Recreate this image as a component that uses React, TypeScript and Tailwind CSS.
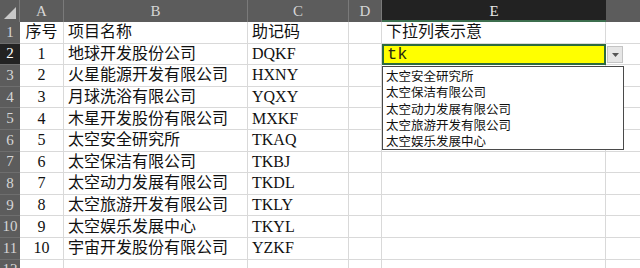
const ROWS: [string, string, string][] = [
  ["序号", "项目名称", "助记码"],
  ["1", "地球开发股份公司", "DQKF"],
  ["2", "火星能源开发有限公司", "HXNY"],
  ["3", "月球洗浴有限公司", "YQXY"],
  ["4", "木星开发股份有限公司", "MXKF"],
  ["5", "太空安全研究所", "TKAQ"],
  ["6", "太空保洁有限公司", "TKBJ"],
  ["7", "太空动力发展有限公司", "TKDL"],
  ["8", "太空旅游开发有限公司", "TKLY"],
  ["9", "太空娱乐发展中心", "TKYL"],
  ["10", "宇宙开发股份有限公司", "YZKF"],
  ["", "", ""],
];

const OPTIONS = [
  "太空安全研究所",
  "太空保洁有限公司",
  "太空动力发展有限公司",
  "太空旅游开发有限公司",
  "太空娱乐发展中心",
];

const FONT = "font-['Liberation_Serif','Noto_Sans_CJK_SC',serif]";
const cell = "h-full shrink-0 border-r border-b border-[#d9d9d9] flex items-center";

export default function App() {
  return (
    <div className={`relative w-[640px] h-[268px] overflow-hidden bg-white text-[#111] ${FONT}`}>
      {/* column headers */}
      <div className="flex h-[22px] bg-[#5c5c5c] text-[15px] text-[#d6d6d6]">
        <div className="relative w-[20px] shrink-0 border-r border-[#7a7a7a]">
          <svg className="absolute right-[3px] bottom-[3px]" width="12" height="12" viewBox="0 0 12 12">
            <polygon points="12,0 12,12 0,12" fill="#c8c8c8" />
          </svg>
        </div>
        <div className="flex w-[44px] shrink-0 items-center justify-center border-r border-[#7a7a7a]">A</div>
        <div className="flex w-[184px] shrink-0 items-center justify-center border-r border-[#7a7a7a]">B</div>
        <div className="flex w-[101px] shrink-0 items-center justify-center border-r border-[#7a7a7a]">C</div>
        <div className="flex w-[33px] shrink-0 items-center justify-center border-r border-[#7a7a7a]">D</div>
        <div className="flex w-[224px] shrink-0 items-center justify-center border-b-2 border-[#3c6e4e] bg-[#222] pt-[2px] text-[#e8e8e8]">E</div>
        <div className="w-[34px] shrink-0" />
      </div>

      {ROWS.map((r, i) => (
        <div key={i} className="flex h-[21.6px] text-[16px] leading-none">
          <div
            className={`flex w-[20px] shrink-0 items-center justify-center border-b border-[#6e6e6e] text-[15px] ${
              i === 1 ? "bg-[#222] text-white" : "bg-[#5c5c5c] text-[#d6d6d6]"
            }`}
          >
            {i + 1}
          </div>
          <div className={`${cell} w-[44px] justify-center`}>{r[0]}</div>
          <div className={`${cell} w-[184px] pl-[4px]`}>{r[1]}</div>
          <div className={`${cell} w-[101px] pl-[4px]`}>{r[2]}</div>
          <div className={`${cell} w-[33px]`} />
          {i === 1 ? (
            <div className="flex h-full w-[224px] shrink-0 items-center border-2 border-[#2d6a3f] bg-[#ffff00] pl-[3px] font-['Liberation_Mono',monospace] text-[17px] text-[#2a2a10]">
              tk
            </div>
          ) : (
            <div className={`${cell} w-[224px] pl-[4px]`}>{i === 0 ? "下拉列表示意" : ""}</div>
          )}
          <div className={`${cell} w-[34px] border-r-0`} />
        </div>
      ))}

      {/* validation dropdown arrow */}
      <div className="absolute left-[607px] top-[46px] flex h-[17px] w-[16px] items-center justify-center border border-[#c4c4c4] bg-[#e6e6e6]">
        <svg width="7" height="4" viewBox="0 0 7 4">
          <polygon points="0,0 7,0 3.5,4" fill="#555" />
        </svg>
      </div>

      {/* dropdown list */}
      <div className="absolute left-[382px] top-[66px] flex h-[84px] w-[242px] flex-col border border-[#4a4a4a] bg-white pt-[1px] font-['Noto_Sans_CJK_SC',sans-serif] text-[12.5px] leading-[14px] text-[#111]">
        {OPTIONS.map((o) => (
          <div key={o} className="flex h-[16.4px] items-center pl-[3px]">
            {o}
          </div>
        ))}
      </div>
    </div>
  );
}
